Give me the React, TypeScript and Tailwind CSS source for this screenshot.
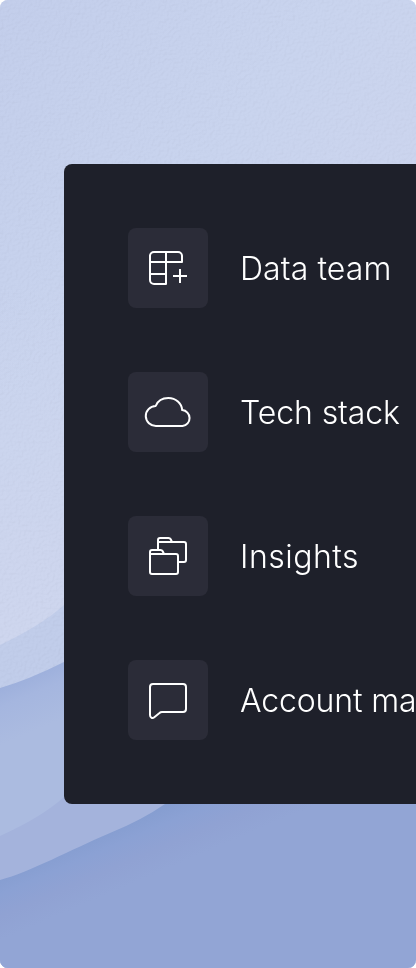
import type { ReactNode } from "react";

type Item = { label: string; tracking: string; icon: ReactNode };

const items: Item[] = [
  {
    label: "Data team",
    tracking: "tracking-[0.1px]",
    icon: (
      <>
        <path d="M38 24H26a4 4 0 0 0-4 4v24a4 4 0 0 0 4 4h12V24h12a4 4 0 0 1 4 4v6H22" />
        <path d="M22 46h16M52 41v14M45 48h14" />
      </>
    ),
  },
  {
    label: "Tech stack",
    tracking: "tracking-[-0.1px]",
    icon: <path d="M28 54a10 10 0 0 1-.5-20C29.500 29 34.500 26 40 26c7.500 0 13.200 5.500 13.700 12.100a8 8 0 0 1 .3 15.900Z" transform="translate(-.2 0) scale(1.013 1)" />,
  },
  {
    label: "Insights",
    tracking: "tracking-[0.5px]",
    icon: (
      <>
        <path d="M22 38v-2a2 2 0 0 1 2-2h8.500q1.500 0 2.200 1.300L36 38h12a2 2 0 0 1 2 2v16a2 2 0 0 1-2 2H24a2 2 0 0 1-2-2V38h14" />
        <path d="M30 34V24a2 2 0 0 1 2-2h8.500q1.500 0 2.200 1.300L44 26H30M44 26h12a2 2 0 0 1 2 2v16a2 2 0 0 1-2 2h-6" />
      </>
    ),
  },
  {
    label: "Account management",
    tracking: "tracking-[-0.15px]",
    icon: <path d="M25 24h30a3 3 0 0 1 3 3v22a3 3 0 0 1-3 3H34q-1.500 0-2.500 1l-5.200 4.200C24.500 58.700 22 58 22 55V27a3 3 0 0 1 3-3Z" />,
  },
];

function Waves() {
  return (
    <svg className="absolute inset-0 h-full w-full" viewBox="0 0 416 968" fill="none" aria-hidden="true">
      <defs>
        <linearGradient id="sky" x1="0" y1="0" x2="416" y2="320" gradientUnits="userSpaceOnUse">
          <stop stopColor="#c3ceeb" />
          <stop offset=".5" stopColor="#c9d4ee" />
          <stop offset="1" stopColor="#cdd5ee" />
        </linearGradient>
        <linearGradient id="fade" x1="0" y1="280" x2="0" y2="640" gradientUnits="userSpaceOnUse">
          <stop stopColor="#ced6ee" stopOpacity="0" />
          <stop offset="1" stopColor="#ced6ee" />
        </linearGradient>
        <linearGradient id="middle" x1="0" y1="682" x2="23" y2="736" gradientUnits="userSpaceOnUse">
          <stop stopColor="#9baedb" />
          <stop offset=".4" stopColor="#a5b6df" />
          <stop offset="1" stopColor="#abbbe0" />
        </linearGradient>
        <linearGradient id="front" x1="0" y1="874" x2="24" y2="930" gradientUnits="userSpaceOnUse">
          <stop stopColor="#859dd0" />
          <stop offset=".3" stopColor="#8ba1d4" />
          <stop offset=".65" stopColor="#90a2d3" />
          <stop offset="1" stopColor="#92a5d5" />
        </linearGradient>
        <filter id="paper" x="0" y="0" width="100%" height="100%">
          <feTurbulence type="fractalNoise" baseFrequency=".35" numOctaves="3" seed="8" result="noise" />
          <feDiffuseLighting in="noise" surfaceScale="1.6" lightingColor="#fff">
            <feDistantLight azimuth="225" elevation="65" />
          </feDiffuseLighting>
        </filter>
      </defs>
      <path fill="url(#sky)" d="M0 0h416v968H0z" />
      <path fill="url(#fade)" d="M0 280h416v500H0z" />
      <path fill="#c1cdea" d="M0 645Q42 625 64 605L180 500V968H0Z" />
      <path className="opacity-10 mix-blend-multiply" filter="url(#paper)" fill="white" d="M0 0h416v700H0z" />
      <path fill="url(#middle)" d="M0 688Q28 680 64 662L180 600V968H0Z" />
      <path fill="#a4b3dc" d="M0 836Q42 817 64 797L180 700V968H0Z" />
      <path fill="url(#front)" d="M0 880C30 872 70 850 110 833Q142 820 165 804L260 740H416V968H0Z" />
    </svg>
  );
}

export default function App() {
  return (
    <main className="relative h-[968px] w-[416px] overflow-hidden rounded-lg bg-[#c7d1ec] pt-[164px] pl-16">
      <Waves />
      <section className="relative h-[640px] w-[640px] rounded-lg bg-[#1e202a] p-16">
        <ul className="flex flex-col gap-16">
          {items.map(({ label, tracking, icon }) => (
            <li key={label} className="flex items-center gap-8">
              <span className="size-20 shrink-0 rounded-lg bg-[#2b2c38]">
                <svg className="size-20" viewBox="0 0 80 80" fill="none" stroke="white" strokeWidth="2" strokeLinejoin="round" aria-hidden="true">
                  {icon}
                </svg>
              </span>
              <span className={`pt-0.5 whitespace-nowrap font-['Inter',sans-serif] text-[32px] leading-10 font-[330] text-white ${tracking}`}>
                {label}
              </span>
            </li>
          ))}
        </ul>
      </section>
    </main>
  );
}
